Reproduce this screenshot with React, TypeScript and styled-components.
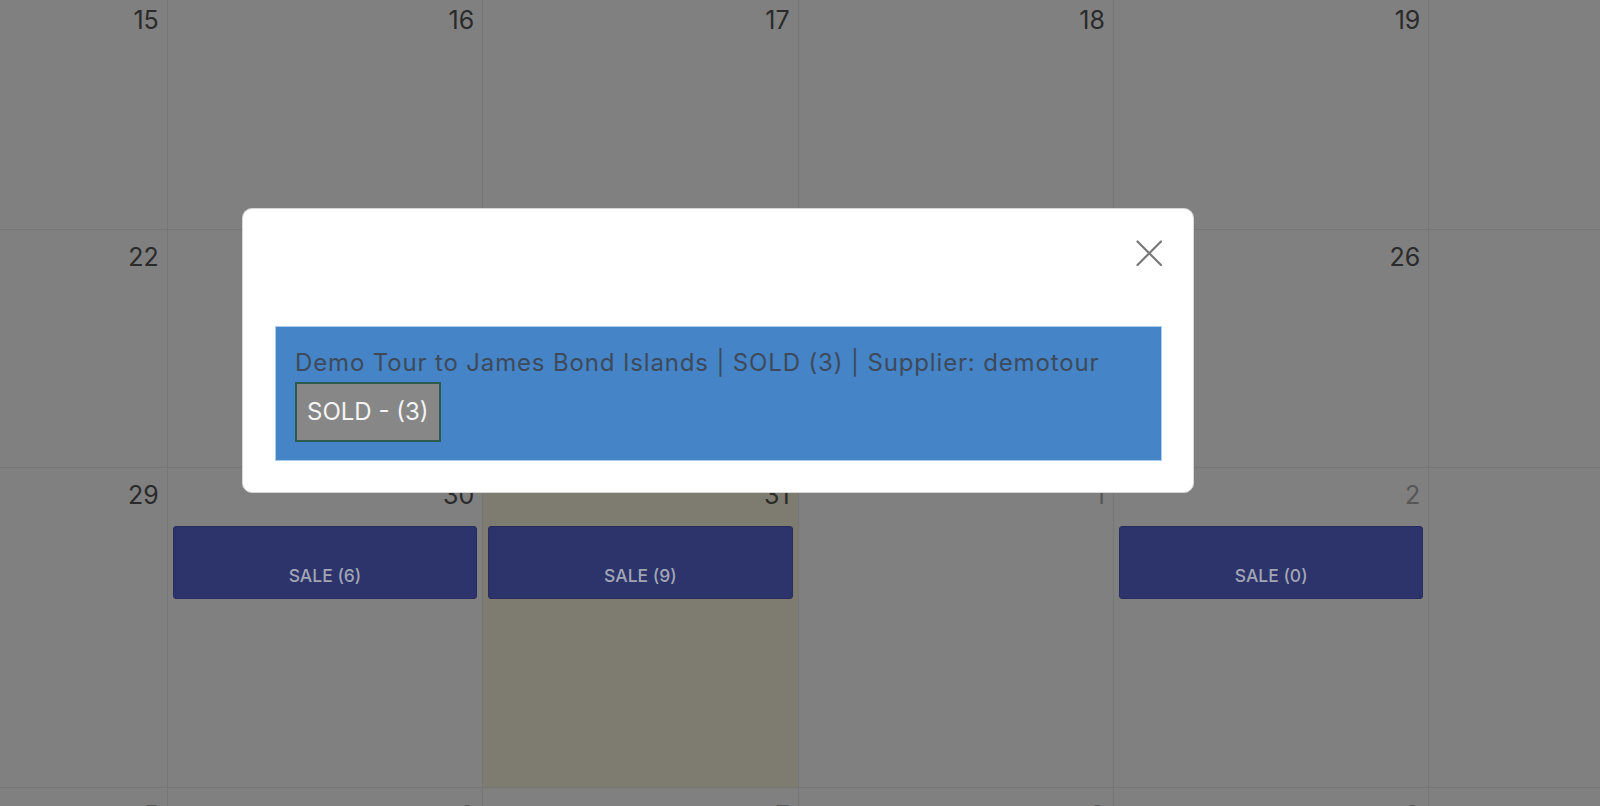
import React from 'react';
import styled, { createGlobalStyle } from 'styled-components';

const GlobalStyle = createGlobalStyle`
  html, body {
    margin: 0;
    padding: 0;
    width: 100%;
    height: 100%;
    overflow: hidden;
    background: #808080;
    font-family: 'Inter', 'Open Sans', Arial, sans-serif;
  }
  * {
    box-sizing: border-box;
  }
`;

const Page = styled.div`
  width: 1600px;
  height: 806px;
  overflow: hidden;
  background: #808080;
`;

// the month view is wider than the window; its first column is scrolled out of sight
const Calendar = styled.div`
  width: 2208px;
  margin-left: -463px;
  margin-top: -7px;
`;

const WeekRow = styled.div<{ $height: number }>`
  display: grid;
  grid-template-columns: repeat(7, 315.4px);
  height: ${(p) => p.$height}px;
  border-bottom: 1px solid #767676;
`;

const DayCell = styled.div<{ $today?: boolean }>`
  display: flex;
  flex-direction: column;
  border-right: 1px solid #767676;
  background: ${(p) => (p.$today ? '#7e7c70' : 'transparent')};
`;

const DayNumber = styled.div<{ $muted?: boolean }>`
  padding: 15px 8px 0 0;
  text-align: right;
  font-size: 25px;
  line-height: 25px;
  color: ${(p) => (p.$muted ? '#575757' : '#2a2a2a')};
`;

const EventChip = styled.div`
  height: 73px;
  margin: 18px 5px 0 5px;
  padding-bottom: 12px;
  display: flex;
  align-items: flex-end;
  justify-content: center;
  background: #2c346b;
  border: 1px solid #262d5e;
  border-radius: 3px;
  color: #a2a5b4;
  font-size: 17.5px;
  font-weight: 500;
  line-height: 20px;
  text-transform: uppercase;
`;

const Dialog = styled.div`
  position: fixed;
  top: 208px;
  left: 242px;
  width: 952px;
  padding: 31px 31px 31px 32px;
  background: #ffffff;
  border: 1px solid #d6d6d6;
  border-radius: 10px;
`;

const DialogHeader = styled.div`
  height: 86px;
  display: flex;
  justify-content: flex-end;
  align-items: flex-start;
`;

const CloseButton = styled.button`
  width: 26px;
  height: 26px;
  padding: 0;
  border: none;
  background: none;
  cursor: pointer;
  display: flex;
`;

const InfoBox = styled.div`
  background: #4584c6;
  border: 1px solid #a9cdf0;
  padding: 18px 19px 18px 19px;
`;

const InfoText = styled.div`
  font-size: 24px;
  line-height: 36px;
  color: #3e4a5a;
  letter-spacing: 0.85px;
`;

const StatusBadge = styled.span`
  display: inline-block;
  margin-top: 1px;
  padding: 10px 10px;
  background: #878787;
  border: 2px solid #2d5a4f;
  color: #f4f4f4;
  font-size: 24px;
  line-height: 36px;
`;

type Day = { n: number; muted?: boolean; today?: boolean; event?: string };

const weeks: { height: number; days: Day[] }[] = [
  { height: 237, days: [14, 15, 16, 17, 18, 19, 20].map((n) => ({ n })) },
  { height: 238, days: [21, 22, 23, 24, 25, 26, 27].map((n) => ({ n })) },
  {
    height: 320,
    days: [
      { n: 28 },
      { n: 29 },
      { n: 30, event: 'Sale (6)' },
      { n: 31, today: true, event: 'Sale (9)' },
      { n: 1, muted: true },
      { n: 2, muted: true, event: 'Sale (0)' },
      { n: 3, muted: true },
    ],
  },
  { height: 120, days: [4, 5, 6, 7, 8, 9, 10].map((n) => ({ n, muted: true })) },
];

const CloseIcon = () => (
  <svg width="26" height="26" viewBox="0 0 26 26">
    <path d="M1.5 1.5 L25 25 M25 1.5 L1.5 25" stroke="#777777" strokeWidth="2.2" strokeLinecap="round" />
  </svg>
);

export default function App() {
  return (
    <Page>
      <GlobalStyle />
      <Calendar>
        {weeks.map((w, i) => (
          <WeekRow key={i} $height={w.height}>
            {w.days.map((d, j) => (
              <DayCell key={j} $today={d.today}>
                <DayNumber $muted={d.muted}>{d.n}</DayNumber>
                {d.event && <EventChip>{d.event}</EventChip>}
              </DayCell>
            ))}
          </WeekRow>
        ))}
      </Calendar>

      <Dialog>
        <DialogHeader>
          <CloseButton aria-label="Close">
            <CloseIcon />
          </CloseButton>
        </DialogHeader>
        <InfoBox>
          <InfoText>Demo Tour to James Bond Islands | SOLD (3) | Supplier: demotour</InfoText>
          <StatusBadge>SOLD - (3)</StatusBadge>
        </InfoBox>
      </Dialog>
    </Page>
  );
}
